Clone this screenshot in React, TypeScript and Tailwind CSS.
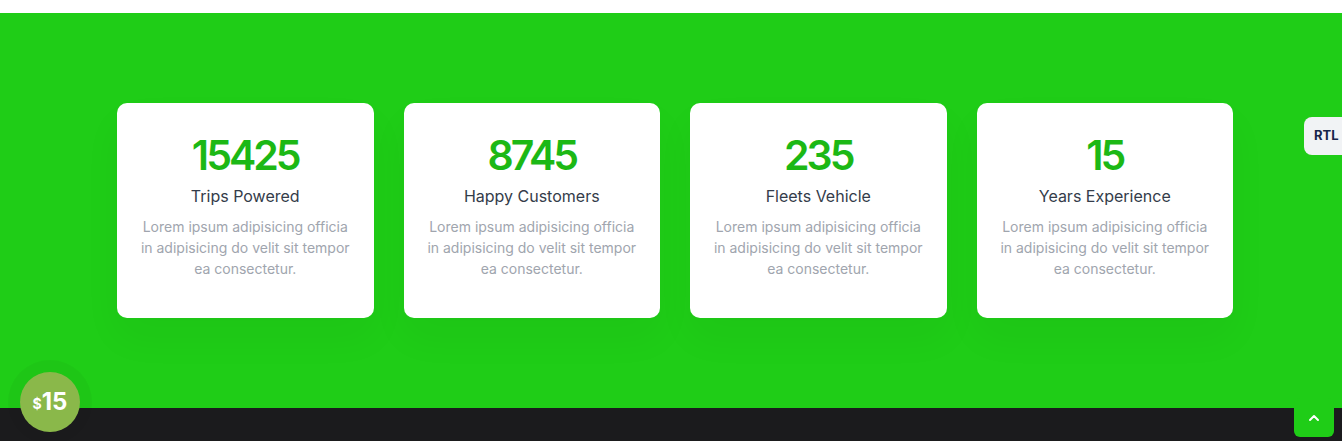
import { ChevronUp } from "lucide-react"

const stats = [
  { value: "15425", label: "Trips Powered" },
  { value: "8745", label: "Happy Customers" },
  { value: "235", label: "Fleets Vehicle" },
  { value: "15", label: "Years Experience" },
]

function StatCard({ value, label }: { value: string; label: string }) {
  return (
    <div className="bg-white rounded-[10px] h-[215px] pt-[30px] px-[22px] text-center shadow-[0_20px_40px_rgba(0,0,0,0.04)]">
      <div className="text-[41px] leading-[44px] font-semibold text-[#1cb815] tracking-[-3px]">{value}</div>
      <h5 className="mt-[7px] text-[16px] leading-[24px] text-[#343c4a]">{label}</h5>
      <p className="mt-[8px] text-[14px] leading-[21px] text-[#a0a5ae]">
        Lorem ipsum adipisicing officia in adipisicing do velit sit tempor ea consectetur.
      </p>
    </div>
  )
}

export default function App() {
  return (
    <main className="relative w-[1342px] h-[441px] overflow-hidden bg-white font-['Inter',sans-serif]">
      <div className="h-[13px] bg-white" />
      <section className="h-[395px] bg-[#1fcd17] pt-[90px]">
        <div className="ml-[117px] w-[1116px] grid grid-cols-4 gap-[30px]">
          {stats.map((s) => (
            <StatCard key={s.label} {...s} />
          ))}
        </div>
      </section>
      <footer className="h-[33px] bg-[#1b1b1d]" />

      <button className="absolute right-0 top-[117px] w-[38px] h-[38px] bg-[#f1f3f5] rounded-l-[8px] text-[13px] font-bold text-[#17254a] text-left pl-[10px]">
        RTL
      </button>

      <div className="absolute left-[8px] top-[360px] w-[84px] h-[84px] rounded-full bg-[rgba(0,0,0,0.03)] flex items-center justify-center">
        <div className="w-[60px] h-[60px] rounded-full bg-[#8ab84a] flex items-center justify-center text-white font-bold">
          <span className="text-[14px] mt-[3px]">$</span>
          <span className="text-[24px] leading-none">15</span>
        </div>
      </div>

      <button className="absolute left-[1294px] top-[398px] w-[40px] h-[39px] rounded-[6px] bg-[#1fcd17] flex items-center justify-center text-white">
        <ChevronUp size={16} strokeWidth={3} />
      </button>
    </main>
  )
}
